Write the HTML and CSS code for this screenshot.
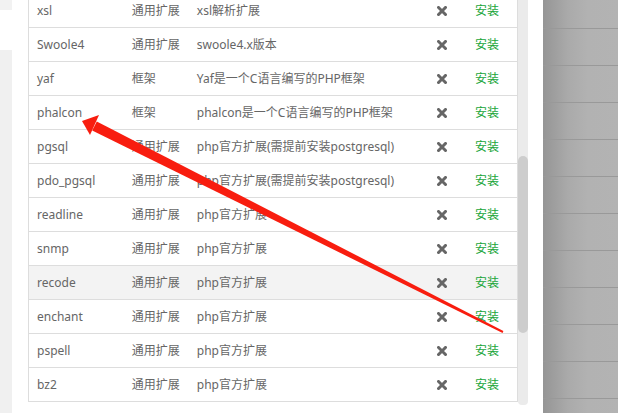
FILE: index.html
```html
<!DOCTYPE html>
<html lang="zh-CN">

<head>
    <meta charset="UTF-8">
    <meta name="viewport" content="width=device-width, initial-scale=1.0">
    <link rel="stylesheet" href="styles.css">
</head>

<body>
    <div class="stage">
        <div class="side-menu">
            <div class="side-top"></div>
            <div class="side-active"></div>
            <div class="side-rest"></div>
        </div>

        <div class="soft-list">
            <table class="soft-table">
                <colgroup>
                    <col class="c-name">
                    <col class="c-type">
                    <col class="c-desc">
                    <col class="c-del">
                    <col class="c-op">
                </colgroup>
                <tbody>
                    <tr><td>xsl</td><td>通用扩展</td><td>xsl解析扩展</td><td class="del"><svg viewBox="0 0 10 10"><path d="M1.5 1.5 L8.5 8.5 M8.5 1.5 L1.5 8.5"></path></svg></td><td class="op">安装</td></tr>
                    <tr><td>Swoole4</td><td>通用扩展</td><td>swoole4.x版本</td><td class="del"><svg viewBox="0 0 10 10"><path d="M1.5 1.5 L8.5 8.5 M8.5 1.5 L1.5 8.5"></path></svg></td><td class="op">安装</td></tr>
                    <tr><td>yaf</td><td>框架</td><td>Yaf是一个C语言编写的PHP框架</td><td class="del"><svg viewBox="0 0 10 10"><path d="M1.5 1.5 L8.5 8.5 M8.5 1.5 L1.5 8.5"></path></svg></td><td class="op">安装</td></tr>
                    <tr><td>phalcon</td><td>框架</td><td>phalcon是一个C语言编写的PHP框架</td><td class="del"><svg viewBox="0 0 10 10"><path d="M1.5 1.5 L8.5 8.5 M8.5 1.5 L1.5 8.5"></path></svg></td><td class="op">安装</td></tr>
                    <tr><td>pgsql</td><td>通用扩展</td><td>php官方扩展(需提前安装postgresql)</td><td class="del"><svg viewBox="0 0 10 10"><path d="M1.5 1.5 L8.5 8.5 M8.5 1.5 L1.5 8.5"></path></svg></td><td class="op">安装</td></tr>
                    <tr><td>pdo_pgsql</td><td>通用扩展</td><td>php官方扩展(需提前安装postgresql)</td><td class="del"><svg viewBox="0 0 10 10"><path d="M1.5 1.5 L8.5 8.5 M8.5 1.5 L1.5 8.5"></path></svg></td><td class="op">安装</td></tr>
                    <tr><td>readline</td><td>通用扩展</td><td>php官方扩展</td><td class="del"><svg viewBox="0 0 10 10"><path d="M1.5 1.5 L8.5 8.5 M8.5 1.5 L1.5 8.5"></path></svg></td><td class="op">安装</td></tr>
                    <tr><td>snmp</td><td>通用扩展</td><td>php官方扩展</td><td class="del"><svg viewBox="0 0 10 10"><path d="M1.5 1.5 L8.5 8.5 M8.5 1.5 L1.5 8.5"></path></svg></td><td class="op">安装</td></tr>
                    <tr class="hover"><td>recode</td><td>通用扩展</td><td>php官方扩展</td><td class="del"><svg viewBox="0 0 10 10"><path d="M1.5 1.5 L8.5 8.5 M8.5 1.5 L1.5 8.5"></path></svg></td><td class="op">安装</td></tr>
                    <tr><td>enchant</td><td>通用扩展</td><td>php官方扩展</td><td class="del"><svg viewBox="0 0 10 10"><path d="M1.5 1.5 L8.5 8.5 M8.5 1.5 L1.5 8.5"></path></svg></td><td class="op">安装</td></tr>
                    <tr><td>pspell</td><td>通用扩展</td><td>php官方扩展</td><td class="del"><svg viewBox="0 0 10 10"><path d="M1.5 1.5 L8.5 8.5 M8.5 1.5 L1.5 8.5"></path></svg></td><td class="op">安装</td></tr>
                    <tr><td>bz2</td><td>通用扩展</td><td>php官方扩展</td><td class="del"><svg viewBox="0 0 10 10"><path d="M1.5 1.5 L8.5 8.5 M8.5 1.5 L1.5 8.5"></path></svg></td><td class="op">安装</td></tr>
                </tbody>
            </table>
        </div>

        <div class="scroll-track">
            <div class="scroll-thumb"></div>
        </div>

        <div class="gap"></div>

        <div class="shade"></div>
    </div>

    <!-- annotation arrow drawn over the screenshot -->
    <svg class="arrow" viewBox="0 0 618 413">
        <polygon points="96.8,121.4 92.2,130.6 502.6,332.9 503.4,331.1"></polygon>
        <polygon points="82,121 99,115 90,135"></polygon>
    </svg>
</body>

</html>
```

FILE: styles.css
```css
html,
body {
    margin: 0;
    padding: 0;
    background: #fff;
    overflow: hidden;
}

body {
    position: relative;
    width: 618px;
    height: 413px;
    font-family: "Noto Sans", "Noto Sans CJK SC", sans-serif;
    font-size: 12px;
    color: #666;
}

.stage {
    display: flex;
    height: 413px;
}

/* left tab column of the dialog */
.side-menu {
    width: 12px;
    display: flex;
    flex-direction: column;
    margin-right: 16px;
}

.side-top {
    height: 10px;
    background: #f2f2f2;
}

.side-active {
    height: 40px;
    background: #fff;
}

.side-rest {
    flex: 1;
    background: #f0f0f0;
}

/* table */
.soft-list {
    width: 490px;
    height: 403px;
    overflow: hidden;
}

.soft-table {
    width: 490px;
    margin-top: -6px;
    border-collapse: collapse;
    table-layout: fixed;
    border-left: 1px solid #ddd;
    border-right: 1px solid #ddd;
}

.c-name {
    width: 95px;
}

.c-type {
    width: 65px;
}

.c-desc {
    width: 238px;
}

.c-del {
    width: 30px;
}

.c-op {
    width: 60px;
}

.soft-table td {
    height: 33px;
    padding: 0 0 0 8px;
    border-bottom: 1px solid #ddd;
    white-space: nowrap;
    overflow: hidden;
    line-height: 16px;
}

.soft-table tr.hover td {
    background: #f3f3f3;
}

.soft-table td.del {
    padding: 0;
    text-align: center;
}

.del svg {
    width: 10px;
    height: 10px;
    display: block;
    margin: 1px auto 0;
}

.del path {
    stroke: #666;
    stroke-width: 3;
    stroke-linecap: square;
    fill: none;
}

.soft-table td.op {
    padding: 0 18px 0 0;
    text-align: right;
    color: #20a53a;
}

/* scrollbar */
.scroll-track {
    width: 10px;
    height: 405px;
    background: #ebebeb;
    border-radius: 0 0 4px 4px;
}

.scroll-thumb {
    margin-top: 156px;
    height: 177px;
    background: #cdcdcd;
    border-radius: 5px;
}

.gap {
    width: 15px;
}

/* dimmed page behind the dialog */
.shade {
    flex: 1;
    background:
        repeating-linear-gradient(to bottom, transparent 0, transparent 27px, #999 27px, #999 28px, transparent 28px, transparent 37px),
        linear-gradient(to right, #959595, #aaaaaa 25px, #b2b2b2 45px, #b3b3b3);
    background-position: 0 1px, 0 0;
}

.arrow {
    position: absolute;
    left: 0;
    top: 0;
    width: 618px;
    height: 413px;
    pointer-events: none;
}

.arrow polygon {
    fill: #f81d0f;
}
```
